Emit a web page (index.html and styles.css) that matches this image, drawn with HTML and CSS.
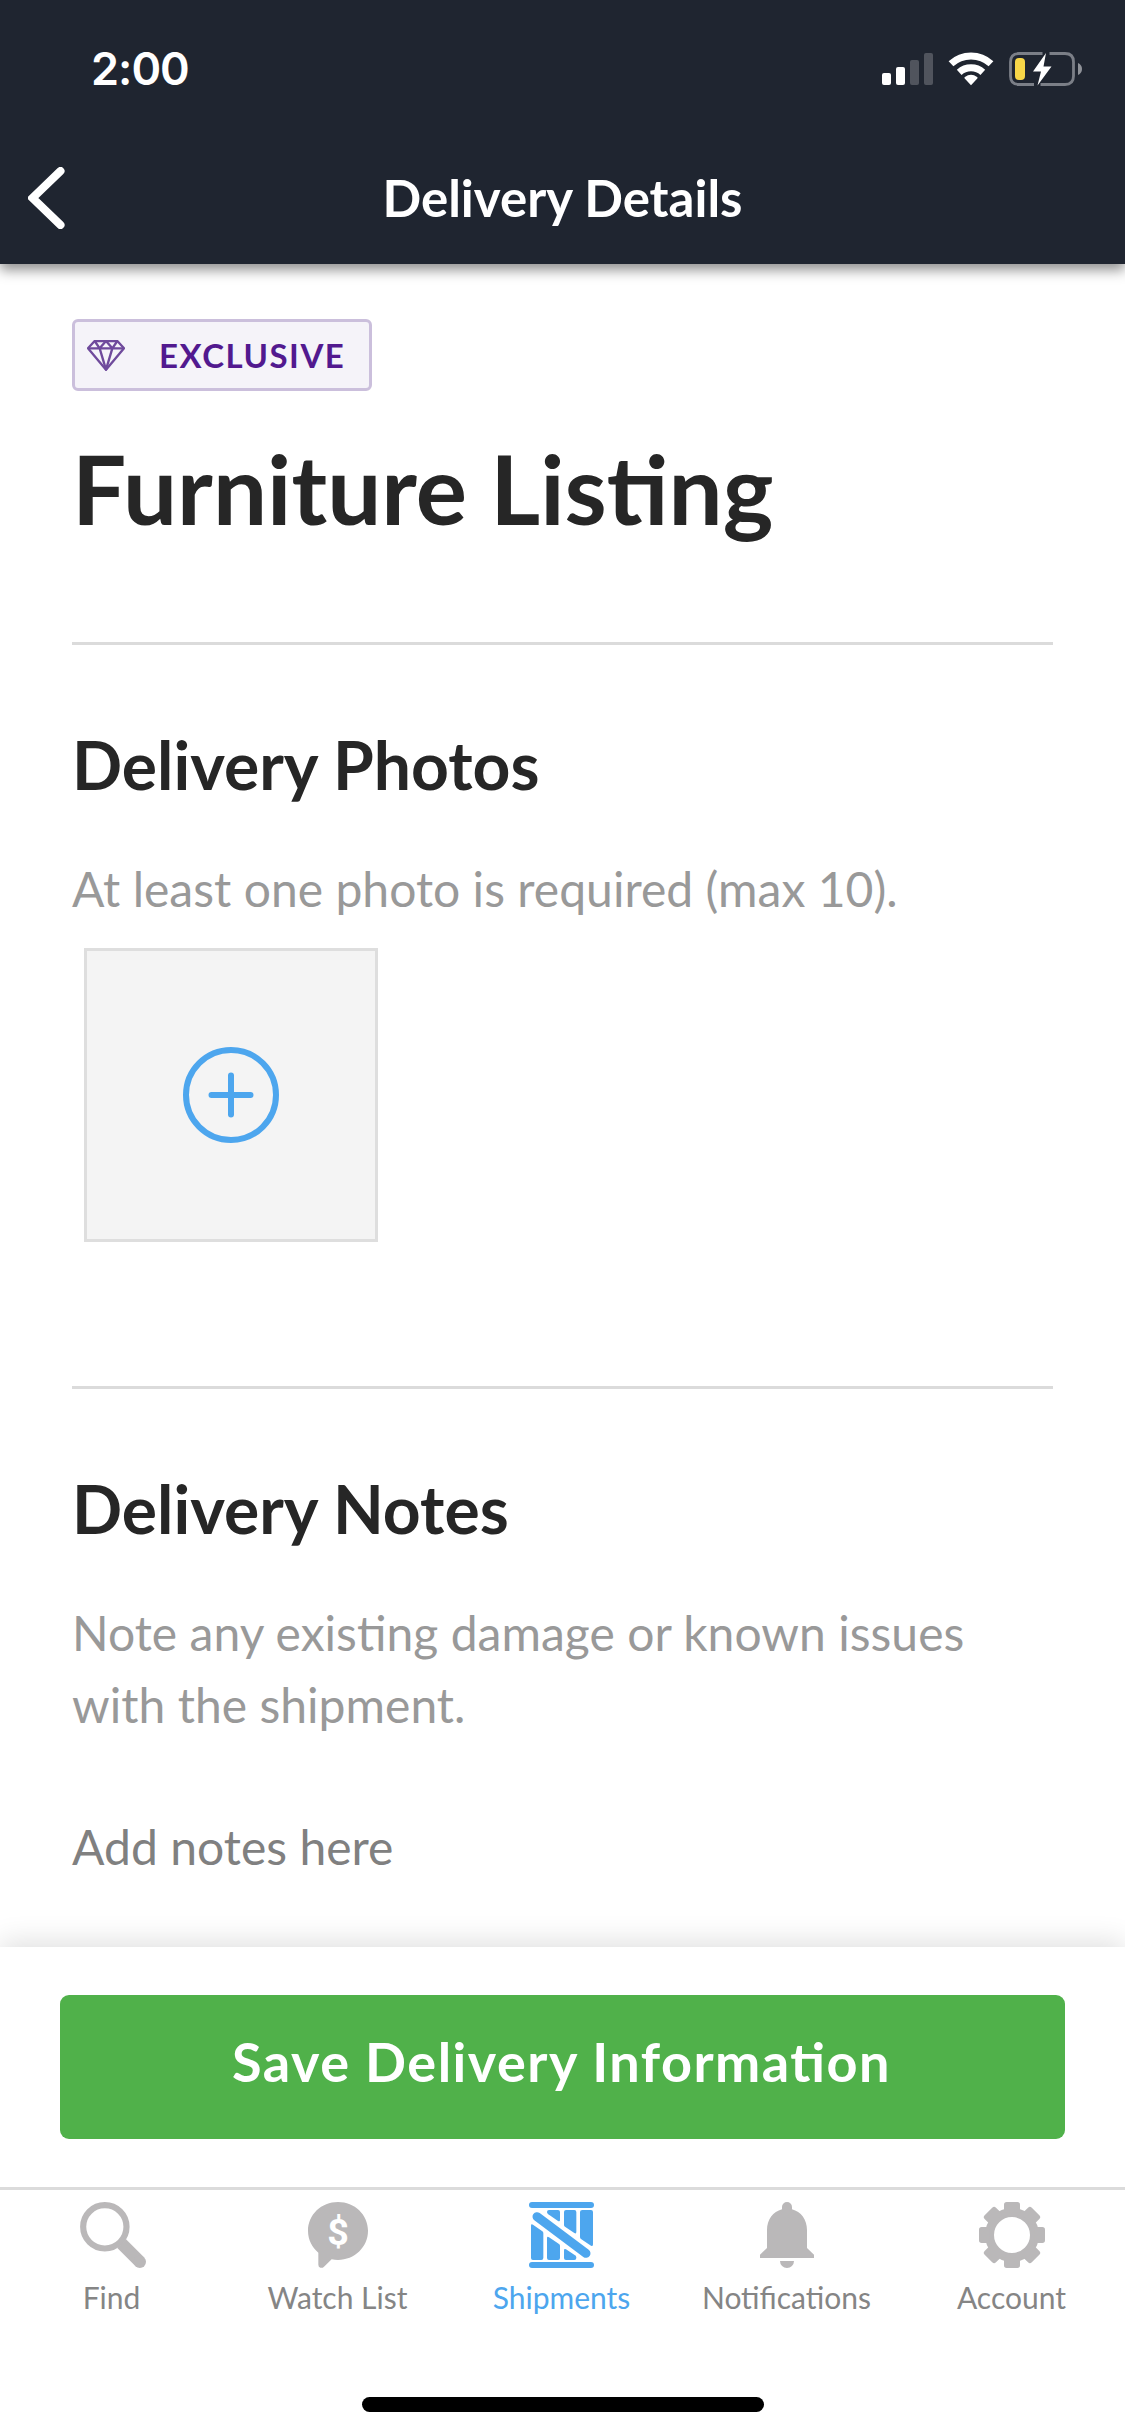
FILE: index.html
```html
<!DOCTYPE html>
<html lang="en">
<head>
<meta charset="utf-8">
<title>Delivery Details</title>
<link rel="stylesheet" href="styles.css">
</head>
<body>
<div class="screen">
  <header class="header">
    <div class="status">
      <span class="time">2:00</span>
      <svg class="status-icons" viewBox="880 50 204 38" aria-hidden="true">
        <g fill="#fff">
          <rect x="882" y="73" width="9" height="12" rx="2"/>
          <rect x="896" y="67" width="9" height="18" rx="2"/>
          <rect x="910" y="60" width="9" height="25" rx="2" opacity=".22"/>
          <rect x="924" y="53" width="9" height="32" rx="2" opacity=".22"/>
          <path d="M971 85.2l-6.3-6.6q-.8-.9.2-1.6a10.500 10.500 0 0 1 12.200 0q1 .7.2 1.600z"/>
        </g>
        <g fill="none" stroke="#fff" stroke-width="7">
          <path d="M959.200 72.300a17.500 17.500 0 0 1 23.600 0"/>
          <path d="M951 63.700a29.500 29.500 0 0 1 40 0"/>
        </g>
        <g fill="none" stroke="#7b7f87" stroke-width="2.800">
          <path d="M1042.500 53.500H1019q-8.500 0-8.500 8.500v14q0 8.500 8.500 8.500h15"/>
          <path d="M1049.500 53.500H1065q8.500 0 8.500 8.500v14q0 8.500-8.500 8.500h-24.500"/>
        </g>
        <path d="M1078 63q4 1.800 4 6t-4 6z" fill="#8f9298"/>
        <rect x="1015" y="58" width="10" height="22" rx="4" fill="#f8d748"/>
        <path d="M1046 53l-13 18.500h8L1037.500 85.500 1051.500 66.500h-8z" fill="#fff"/>
      </svg>
    </div>
    <div class="navbar">
      <svg class="back" viewBox="0 0 37 62" aria-hidden="true"><path d="M32.500 4L4.500 31l28 27" fill="none" stroke="#fff" stroke-width="8" stroke-linecap="round"/></svg>
      <h1 class="nav-title">Delivery Details</h1>
    </div>
  </header>

  <main class="content">
    <div class="badge">
      <svg class="gem" viewBox="111 120 114 93" aria-hidden="true">
        <g fill="none" stroke="#6f4a9c" stroke-width="7" stroke-linejoin="round">
          <path d="M134 123h68l20 22-54 64-54-64z"/>
          <path d="M114 145h108M134 123l15 22 19-22 19 22 15-22M149 145l19 64 19-64"/>
        </g>
      </svg>
      <span class="badge-text">EXCLUSIVE</span>
    </div>
    <h2 class="listing">Furniture Listing</h2>
    <section class="section photos">
      <h3 class="section-title">Delivery Photos</h3>
      <p class="hint">At least one photo is required (max 10).</p>
      <div class="tile">
        <svg class="plus" viewBox="0 0 96 96" aria-hidden="true"><g fill="none" stroke="#4da6ee" stroke-width="6" stroke-linecap="round"><circle cx="48" cy="48" r="45"/><path d="M28.500 48h39M48 28.500v39"/></g></svg>
      </div>
    </section>
    <section class="section">
      <h3 class="section-title">Delivery Notes</h3>
      <p class="hint">Note any existing damage or known issues with the shipment.</p>
      <p class="notes">Add notes here</p>
    </section>
  </main>

  <div class="action"><div class="save">Save Delivery Information</div></div>

  <nav class="tabs">
    <div class="tab">
      <svg class="tab-icon" viewBox="90 96 198 198" aria-hidden="true"><circle cx="164.500" cy="170.500" r="65" fill="none" stroke="#bab8b9" stroke-width="18.500"/><path d="M215 221l54 54" stroke="#bab8b9" stroke-width="37" /><circle cx="269.500" cy="275.500" r="18.500" fill="#bab8b9"/></svg>
      <span>Find</span>
    </div>
    <div class="tab">
      <svg class="tab-icon" viewBox="765 96 198 198" aria-hidden="true"><path d="M864 96c50 0 90 38 90 86.500S914 270 864 270q-10 0-19-2l-23 22q-5 5-11 3-6-2-6-9v-36c-19-16-31-38-31-65.500C774 134 814 96 864 96z" fill="#bab8b9"/><text class="dollar" x="864" y="226" text-anchor="middle">$</text></svg>
      <span>Watch List</span>
    </div>
    <div class="tab active">
      <svg class="tab-icon" viewBox="297 96 198 198" aria-hidden="true">
        <g fill="#4da6ee">
          <rect x="297" y="96" width="195" height="18" rx="9"/>
          <rect x="297" y="276" width="195" height="18" rx="9"/>
          <path d="M303 167q0-6 6-3l28 20q3 2 3 6v74q0 6-6 6h-25q-6 0-6-6z"/>
          <path d="M351 205q0-7 6-3l30 20q3 2 3 5v37q0 6-6 6h-27q-6 0-6-6z"/>
          <path d="M402 241q0-6 6-3l27 18q4 3 4 7 0 7-6 7h-25q-6 0-6-6z"/>
          <path d="M357 120h27q6 0 6 6v24q0 6-6 3l-29-20q-4-3-4-7 0-6 6-6z"/>
          <path d="M408 120h25q6 0 6 6v59q0 8-6 4l-28-19q-3-2-3-5v-39q0-6 6-6z"/>
          <path d="M457 120h26q6 0 6 6v97q0 8-6 4l-30-20q-3-2-3-6v-75q0-6 7-6z"/>
        </g>
        <path d="M321 140l147 110" stroke="#4da6ee" stroke-width="27" stroke-linecap="round"/>
      </svg>
      <span>Shipments</span>
    </div>
    <div class="tab">
      <svg class="tab-icon" viewBox="222 96 198 198" aria-hidden="true"><path d="M306 118v-7a15 15 0 0 1 30 0v7c27 7 45 31 45 62v54l21 20v10H240v-10l21-20v-54c0-31 18-55 45-62zM300 273h42a21 21 0 0 1-42 0z" fill="#bab8b9"/></svg>
      <span>Notifications</span>
    </div>
    <div class="tab">
      <svg class="tab-icon" viewBox="-99 -99 198 198" aria-hidden="true">
        <circle r="67.500" fill="none" stroke="#bab8b9" stroke-width="27"/>
        <g fill="#bab8b9">
          <path id="t" d="M-24-75v-16q0-8 8-8h32q8 0 8 8v16q4 5 14 7h-76q10-2 14-7z"/>
          <use href="#t" transform="rotate(90)"/><use href="#t" transform="rotate(180)"/><use href="#t" transform="rotate(270)"/>
          <rect id="d" x="-24" y="-100" width="48" height="36" rx="8" transform="rotate(45)"/>
          <use href="#d" transform="rotate(90)"/><use href="#d" transform="rotate(180)"/><use href="#d" transform="rotate(270)"/>
        </g>
      </svg>
      <span>Account</span>
    </div>
  </nav>
  <div class="home"><div class="home-bar"></div></div>
</div>
</body>
</html>
```
FILE: styles.css
```css
* { box-sizing: border-box; }
body { margin: 0; background: #fff; font-family: Lato, "Open Sans", sans-serif; }
h1, h2, h3, p { margin: 0; }
svg { display: block; flex: none; }

.screen { width: 1125px; height: 2436px; display: flex; flex-direction: column; overflow: hidden; }

.header { flex: none; height: 264px; background: #1f2530; color: #fff; position: relative; z-index: 1; box-shadow: 0 6px 12px rgba(0, 0, 0, .44); }
.status { height: 132px; display: flex; justify-content: space-between; padding: 50px 41px 0 91px; }
.time { font: 600 45px/38px Inter, sans-serif; letter-spacing: -1px; }
.status-icons { width: 204px; height: 38px; }
.navbar { height: 132px; display: grid; grid-template-columns: 120px 1fr 120px; align-items: center; }
.back { width: 37px; height: 62px; margin-left: 28px; }
.nav-title { font-size: 51px; font-weight: 700; line-height: 60px; text-align: center; }

.content { flex: none; height: 1683px; padding: 55px 72px 0; color: #262626; overflow: hidden; }
.badge { width: 300px; height: 72px; display: flex; align-items: center; gap: 34px; padding: 0 12px; border: 3px solid #cbbfdc; border-radius: 6px; background: #f5f3f9; }
.gem { width: 38px; height: 31px; }
.badge-text { font-size: 33px; font-weight: 700; line-height: 40px; letter-spacing: 1.5px; color: #52198f; }
.listing { margin-top: 37px; height: 214px; font-size: 96px; font-weight: 700; line-height: 120px; }
.section { border-top: 3px solid #dbdbdb; padding-top: 80px; }
.photos { height: 744px; }
.section-title { font-size: 66px; font-weight: 700; line-height: 80px; margin-bottom: 48px; }
.hint, .notes { font-size: 48px; line-height: 72px; letter-spacing: .03px; font-feature-settings: "liga" 1; color: #999; }
.notes { margin-top: 70px; color: #808080; }
.tile { width: 294px; height: 294px; margin: 23px 0 0 12px; display: grid; place-items: center; background: #f4f4f4; border: 3px solid #dedede; }
.plus { width: 96px; height: 96px; }

.action { flex: none; height: 240px; padding: 48px 60px; background: #fff; position: relative; box-shadow: 0 -6px 26px rgba(0, 0, 0, .12); }
.save { height: 144px; border-radius: 9px; background: #50b14a; color: #fff; font-size: 54px; font-weight: 700; line-height: 134px; padding-right: 2px; text-align: center; letter-spacing: 1.5px; font-feature-settings: "liga" 1; }

.tabs { flex: none; position: relative; height: 150px; display: grid; grid-template-columns: 226px 224px 224px 226px 224px; background: #fff; border-top: 3px solid #dbdbdb; color: #858585; }
.tab { display: flex; flex-direction: column; align-items: center; padding-top: 12px; font-size: 30px; line-height: 36px; gap: 11px; }
.tab span { margin-right: 1px; }
.tab:first-child span { margin-right: 3px; }
.tab.active { color: #4da6ee; }
.tab-icon { width: 66px; height: 66px; }
.dollar { font: 700 113px Roboto, sans-serif; fill: #fff; }
.home { flex: 1; display: flex; justify-content: center; padding-top: 60px; background: #fff; position: relative; }
.home-bar { width: 402px; height: 15px; border-radius: 8px; background: #000; }
```
